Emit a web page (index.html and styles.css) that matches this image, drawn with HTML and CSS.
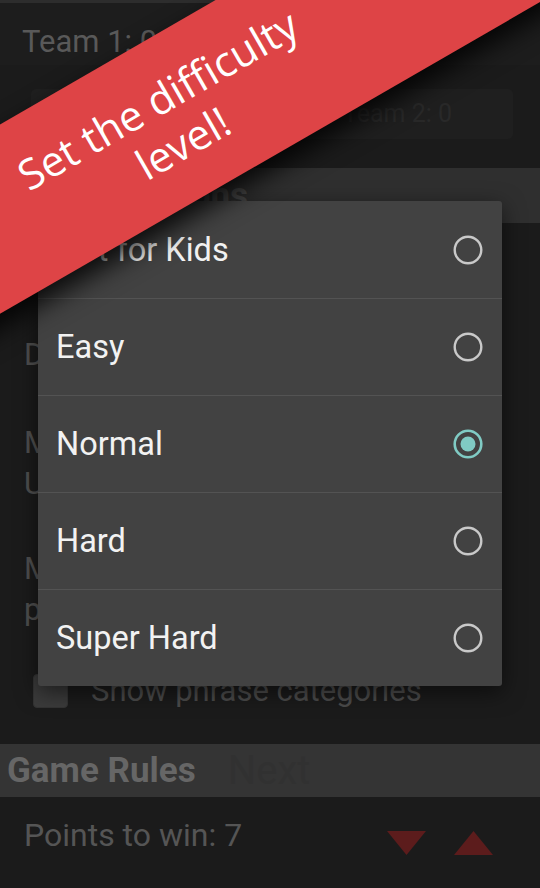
FILE: index.html
```html
<!DOCTYPE html>
<html>
<head>
<meta charset="utf-8">
<link rel="stylesheet" href="styles.css">
</head>
<body>
<div class="app">
  <div class="strip"></div>
  <div class="teambar">Team 1: 0</div>
  <div class="teamrow"><div class="teambox">Team 2: 0</div></div>
  <div class="sechead">Phrase Options</div>
  <div class="content">
    <div class="opt opt-a">Round time: 60s</div>
    <div class="opt opt-b">Difficulty: Normal</div>
    <div class="opt opt-c">Max round time:<br>Unlimited</div>
    <div class="opt opt-d">Max skips per<br>phrase: 3</div>
    <div class="opt opt-e"><span class="checkbox"></span><span>Show phrase categories</span></div>
  </div>
  <div class="grhead"><span class="grtitle">Game Rules</span><span class="ghost">Next</span></div>
  <div class="points">
    <span class="ptext">Points to win: 7</span>
    <div class="arrows">
      <svg class="arrow" width="39" height="24" viewBox="0 0 39 24"><polygon points="0,0 39,0 19.5,24" fill="#5c1c1c"/></svg>
      <svg class="arrow" width="39" height="24" viewBox="0 0 39 24"><polygon points="19.5,0 39,24 0,24" fill="#5c1c1c"/></svg>
    </div>
  </div>
</div>

<div class="dialog">
  <div class="row"><span>Not for Kids</span><svg class="radio" width="30" height="30" viewBox="0 0 30 30"><circle cx="15" cy="15" r="13.3" fill="none" stroke="#c9c9c9" stroke-width="2.4"/></svg></div>
  <div class="row"><span>Easy</span><svg class="radio" width="30" height="30" viewBox="0 0 30 30"><circle cx="15" cy="15" r="13.3" fill="none" stroke="#c9c9c9" stroke-width="2.4"/></svg></div>
  <div class="row"><span>Normal</span><svg class="radio" width="30" height="30" viewBox="0 0 30 30"><circle cx="15" cy="15" r="13.3" fill="none" stroke="#80cbc4" stroke-width="2.6"/><circle cx="15" cy="15" r="7.5" fill="#80cbc4"/></svg></div>
  <div class="row"><span>Hard</span><svg class="radio" width="30" height="30" viewBox="0 0 30 30"><circle cx="15" cy="15" r="13.3" fill="none" stroke="#c9c9c9" stroke-width="2.4"/></svg></div>
  <div class="row"><span>Super Hard</span><svg class="radio" width="30" height="30" viewBox="0 0 30 30"><circle cx="15" cy="15" r="13.3" fill="none" stroke="#c9c9c9" stroke-width="2.4"/></svg></div>
</div>

<div class="banner">
  <div class="btext">Set the difficulty<br>level!</div>
</div>
</body>
</html>
```

FILE: styles.css
```css
html, body {
  margin: 0;
  padding: 0;
}
body {
  width: 540px;
  height: 888px;
  overflow: hidden;
  background: #1b1b1b;
  position: relative;
  font-family: Roboto, "Noto Sans", sans-serif;
}
.app {
  display: flex;
  flex-direction: column;
  height: 888px;
}
.strip {
  height: 3px;
  background: #2d2d2d;
}
.teambar {
  height: 62px;
  box-sizing: border-box;
  background: #1d1d1d;
  padding: 21px 0 0 22px;
  font-size: 31px;
  line-height: 36px;
  color: #595959;
}
.teamrow {
  height: 103px;
  box-sizing: border-box;
  padding: 24px 27px 0 31px;
}
.teambox {
  height: 50px;
  background: #1f1f1f;
  border-radius: 5px;
  padding-left: 312px;
  font-size: 25px;
  line-height: 50px;
  color: #292929;
}
.sechead {
  height: 55px;
  background: #2f2f2f;
  padding-left: 7px;
  font-weight: bold;
  font-size: 35px;
  line-height: 55px;
  color: #4a4a4a;
}
.content {
  height: 521px;
  display: flex;
  flex-direction: column;
}
.opt {
  padding-left: 24px;
  font-size: 31px;
  line-height: 41px;
  color: #4f4f4f;
}
.opt-a { margin-top: 21px; }
.opt-b { margin-top: 49px; }
.opt-c { margin-top: 47px; }
.opt-d { margin-top: 44px; }
.opt-e {
  margin-top: 40px;
  padding-left: 33px;
  display: flex;
  align-items: center;
  gap: 23px;
  color: #4b4b4b;
}
.checkbox {
  width: 35px;
  height: 34px;
  box-sizing: border-box;
  border-radius: 4px;
  background: #3b3b3b;
  border: 1px solid #333;
}
.grhead {
  height: 53px;
  background: #343434;
  display: flex;
  align-items: center;
  padding-left: 7px;
}
.grtitle {
  font-weight: bold;
  font-size: 35px;
  line-height: 53px;
  color: #666;
}
.ghost {
  margin-left: 32px;
  font-size: 40px;
  line-height: 53px;
  color: #313131;
}
.points {
  flex: 1;
  display: flex;
  align-items: flex-start;
  padding: 18px 47px 0 24px;
}
.ptext {
  font-size: 32px;
  line-height: 41px;
  color: #555;
}
.arrows {
  margin-left: auto;
  margin-top: 16px;
  display: flex;
  gap: 28px;
}
.arrow {
  display: block;
}
.dialog {
  position: absolute;
  left: 38px;
  top: 201px;
  width: 464px;
  background: #424242;
  border-radius: 3px;
  box-shadow: 0 6px 22px rgba(0, 0, 0, 0.55);
}
.row {
  height: 97px;
  box-sizing: border-box;
  display: flex;
  align-items: center;
  justify-content: space-between;
  padding: 0 19px 0 18px;
  font-size: 32.5px;
  color: #f2f2f2;
}
.row + .row {
  border-top: 1px solid #535353;
}
.radio {
  display: block;
}
.banner {
  position: absolute;
  left: -330px;
  top: 39px;
  width: 1000px;
  height: 164px;
  background: #de4446;
  transform: rotate(-30deg);
  box-shadow: 0 12px 26px rgba(0, 0, 0, 0.85);
  display: flex;
  align-items: center;
  justify-content: center;
}
.btext {
  font-family: "Open Sans", "Noto Sans", sans-serif;
  font-size: 42px;
  line-height: 50px;
  color: #fff;
  text-align: center;
}
```
